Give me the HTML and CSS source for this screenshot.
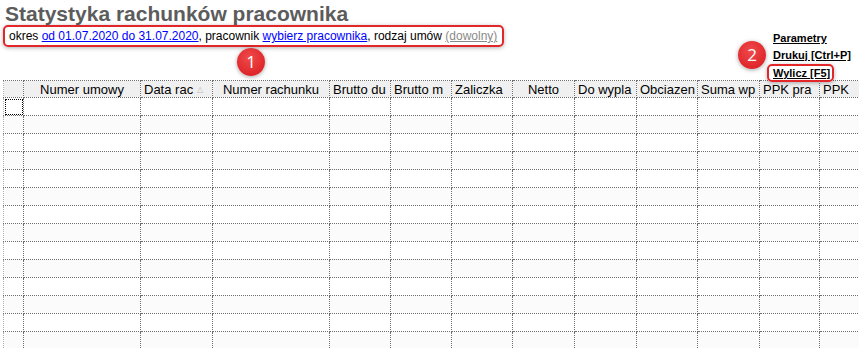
FILE: index.html
```html
<!DOCTYPE html>
<html lang="pl">
<head>
    <meta charset="UTF-8">
    <title>Statystyka rachunków pracownika</title>
    <link rel="stylesheet" href="styles.css">
</head>
<body>
    <div class="top">
        <div class="intro">
            <h1>Statystyka rachunków pracownika</h1>
            <div class="filters mark">
                okres <a href="#">od 01.07.2020 do 31.07.2020</a>, pracownik <a href="#">wybierz pracownika</a>, rodzaj umów <a href="#" class="muted">(dowolny)</a>
            </div>
            <span class="badge badge-one">1</span>
        </div>
        <div class="actions">
            <a href="#">Parametry</a>
            <a href="#">Drukuj [Ctrl+P]</a>
            <a href="#" class="mark">Wylicz [F5]</a>
            <span class="badge badge-two">2</span>
        </div>
    </div>

    <div class="grid-wrap">
        <table class="grid">
            <colgroup>
                <col style="width:20px">
                <col style="width:117px">
                <col style="width:72px">
                <col style="width:117px">
                <col style="width:61px">
                <col style="width:61px">
                <col style="width:61px">
                <col style="width:62px">
                <col style="width:62px">
                <col style="width:61px">
                <col style="width:62px">
                <col style="width:60px">
                <col style="width:100px">
            </colgroup>
            <thead>
                <tr>
                    <th></th>
                    <th class="center">Numer umowy</th>
                    <th>Data rac <span class="sort">&#9651;</span></th>
                    <th class="center">Numer rachunku</th>
                    <th>Brutto du</th>
                    <th>Brutto m</th>
                    <th>Zaliczka</th>
                    <th class="center">Netto</th>
                    <th>Do wypla</th>
                    <th>Obciazen</th>
                    <th>Suma wp</th>
                    <th>PPK pra</th>
                    <th>PPK</th>
                </tr>
            </thead>
            <tbody id="rows"></tbody>
        </table>
    </div>

    <script>
        const rows = document.getElementById('rows');
        for (let i = 0; i < 14; i++) {
            const tr = document.createElement('tr');
            for (let c = 0; c < 13; c++) {
                const td = document.createElement('td');
                if (i === 0 && c === 0) td.classList.add('focus');
                tr.appendChild(td);
            }
            rows.appendChild(tr);
        }
    </script>
</body>
</html>
```

FILE: styles.css
```css
* {
    margin: 0;
    padding: 0;
    box-sizing: border-box;
}

body {
    font-family: "Liberation Sans", Arial, sans-serif;
    background: #ffffff;
    color: #000;
    overflow: hidden;
}

.top {
    display: flex;
    justify-content: space-between;
    height: 80px;
}

.intro {
    position: relative;
    padding-left: 3px;
}

h1 {
    font-size: 21px;
    line-height: 22px;
    padding: 3px 0 0 2px;
    color: #5c5c5c;
    font-weight: bold;
}

.filters {
    display: inline-block;
    font-size: 12px;
    line-height: 16px;
    padding: 1px 5px 1px 4px;
    white-space: nowrap;
}

.filters a {
    color: #0000ff;
}

.filters a.muted {
    color: #8a8a8a;
}

/* annotation frames */
.mark {
    border: 2px solid #e3262a;
    border-radius: 5px;
    box-shadow: 0 1px 4px rgba(0, 0, 0, 0.3);
}

.badge {
    position: absolute;
    width: 28px;
    height: 28px;
    border-radius: 50%;
    background: radial-gradient(circle at 45% 35%, #f04a4c, #d7181c);
    box-shadow: 0 1px 4px rgba(0, 0, 0, 0.35);
    color: #fff;
    font-size: 17px;
    line-height: 28px;
    text-align: center;
    font-family: "Open Sans", "Liberation Sans", sans-serif;
}

.badge-one {
    left: 237px;
    top: 48px;
}

.badge-two {
    left: -29px;
    top: 41px;
}

.actions {
    position: relative;
    display: flex;
    flex-direction: column;
    align-items: flex-start;
    padding-top: 30px;
    width: 92px;
}

.actions a {
    font-size: 11px;
    line-height: 17px;
    font-weight: bold;
    color: #000;
    padding-left: 6px;
}

.actions a.mark {
    line-height: 14px;
    padding: 0 2px 0 4px;
}

.grid-wrap {
    margin-left: 3px;
    overflow: hidden;
}

.grid {
    table-layout: fixed;
    width: 916px;
    border-collapse: collapse;
    font-size: 13px;
}

.grid th,
.grid td {
    border: 1px dotted #6e6e6e;
    height: 18px;
    white-space: nowrap;
    overflow: hidden;
}

.grid th {
    background: #f0f0f0;
    font-weight: normal;
    text-align: left;
    padding: 0 3px;
    height: 17px;
    line-height: 15px;
}

.grid th:first-child,
.grid td:first-child {
    border-left-color: #b0b0b0;
}

.grid th.center {
    text-align: center;
}

.sort {
    font-size: 8px;
    color: #b8b8b8;
    vertical-align: 2px;
}

.grid tbody tr:nth-child(even) td {
    background: #fbfbfb;
}

.grid td.focus {
    outline: 1px dotted #000;
    outline-offset: -2px;
}
```
